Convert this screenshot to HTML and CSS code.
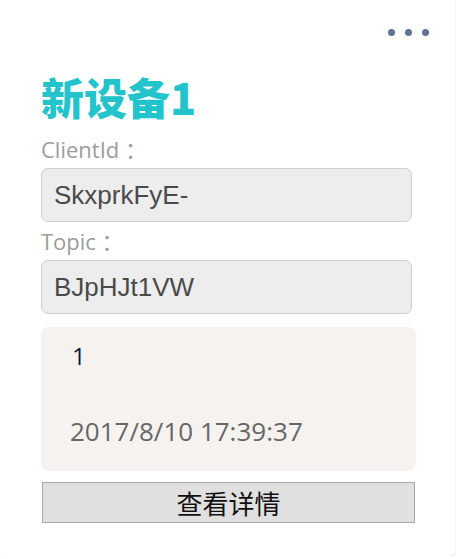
FILE: index.html
```html
<!DOCTYPE html>
<html>
<head>
<meta charset="utf-8">
<link rel="stylesheet" href="styles.css">
</head>
<body>
<div class="card">
  <div class="menu"><span class="dot"></span><span class="dot"></span><span class="dot"></span></div>
  <h1 class="title">新设备1</h1>
  <div class="label">ClientId ：</div>
  <div class="field">SkxprkFyE-</div>
  <div class="label">Topic ：</div>
  <div class="field">BJpHJt1VW</div>
  <div class="msg">
    <div class="msg-val">1</div>
    <div class="msg-time">2017/8/10 17:39:37</div>
  </div>
  <button class="btn">查看详情</button>
</div>
</body>
</html>
```
FILE: styles.css
```css
html, body {
  margin: 0;
  padding: 0;
  background: #fff;
}
.card {
  width: 455px;
  height: 556px;
  box-sizing: border-box;
  background: #fff;
  border-radius: 0 0 6px 2px;
  box-shadow: 0 1px 2px rgba(0,0,0,0.14);
  padding: 29px 0 0 41px;
  font-family: "Open Sans", "Noto Sans CJK SC", sans-serif;
}
.menu {
  display: flex;
  justify-content: flex-end;
  gap: 10px;
  width: 388px;
  height: 12px;
}
.dot {
  width: 7px;
  height: 7px;
  border-radius: 50%;
  background: #627194;
}
.title {
  margin: 30px 0 0 0;
  font-family: "Noto Sans CJK SC", sans-serif;
  font-weight: 900;
  font-size: 43px;
  line-height: 50px;
  color: #23c3cc;
}
.label {
  font-size: 22px;
  line-height: 26px;
  color: #9c9c9c;
  margin-top: 15px;
}
.field + .label { margin-top: 6px; }
.field {
  margin-top: 6px;
  width: 371px;
  height: 54px;
  box-sizing: border-box;
  border: 1px solid #cfcfcf;
  border-radius: 7px;
  background: #ededed;
  padding-left: 12px;
  font-family: "Liberation Sans", Arial, sans-serif;
  font-size: 26px;
  line-height: 52px;
  color: #4a4a4a;
}
.msg {
  margin-top: 13px;
  width: 375px;
  height: 144px;
  box-sizing: border-box;
  background: #f6f2ef;
  border-radius: 8px;
  padding: 12px 0 0 31px;
}
.msg-val {
  font-size: 24px;
  line-height: 34px;
  color: #0b1a3a;
}
.msg-time {
  margin-top: 43px;
  margin-left: -2px;
  font-size: 26px;
  line-height: 30px;
  color: #676767;
}
.btn {
  display: block;
  margin: 11px 0 0 1px;
  width: 373px;
  height: 41px;
  box-sizing: border-box;
  background: #e0e0e0;
  border: 1px solid #a8a8a8;
  border-radius: 0;
  font-family: "Noto Sans CJK SC", sans-serif;
  font-size: 26px;
  line-height: 38px;
  color: #111;
  padding: 0;
}
```
